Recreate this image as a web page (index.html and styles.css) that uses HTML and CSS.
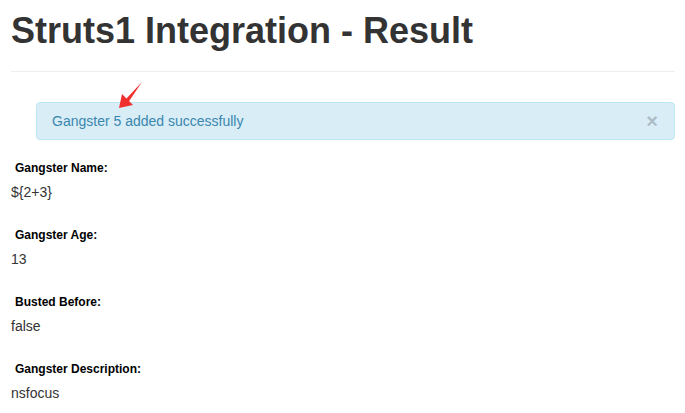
FILE: index.html
```html
<!DOCTYPE html>
<html>
<head>
<meta charset="utf-8">
<link rel="stylesheet" href="styles.css">
</head>
<body>
<div class="page">
  <h1 class="title">Struts1 Integration - Result</h1>
  <div class="rule"></div>
  <div class="alert">
    <span class="alert-text">Gangster 5 added successfully</span>
    <span class="close">&times;</span>
    <svg class="arrow" width="40" height="40" viewBox="0 0 40 40">
      <path d="M29 3 L12.5 20.5 L15.5 23 Z" fill="#f0302e"/>
      <path d="M6 29 L9 15 L20 26 Z" fill="#f0302e"/>
    </svg>
  </div>
  <div class="field">
    <div class="label">Gangster Name:</div>
    <div class="value">${2+3}</div>
  </div>
  <div class="field">
    <div class="label">Gangster Age:</div>
    <div class="value">13</div>
  </div>
  <div class="field">
    <div class="label">Busted Before:</div>
    <div class="value">false</div>
  </div>
  <div class="field">
    <div class="label">Gangster Description:</div>
    <div class="value">nsfocus</div>
  </div>
</div>
</body>
</html>
```
FILE: styles.css
```css
html, body {
  margin: 0;
  padding: 0;
  background: #fff;
}
body {
  font-family: "Liberation Sans", Arial, sans-serif;
  color: #333;
}
.page {
  padding: 0 10px 0 11px;
}
.title {
  margin: 0;
  padding-top: 11px;
  font-size: 36px;
  line-height: 40px;
  font-weight: bold;
  color: #333;
}
.rule {
  margin-top: 20px;
  height: 1px;
  background: #eee;
}
.alert {
  position: relative;
  margin: 30px 0 0 25px;
  height: 36px;
  border: 1px solid #bce8f1;
  border-radius: 4px;
  background: #d9edf7;
  color: #3a87ad;
  display: flex;
  align-items: center;
  padding: 0 16px 0 15px;
  font-size: 14px;
}
.alert-text {
  flex: 1;
}
.close {
  font-size: 20px;
  font-weight: bold;
  color: #000;
  opacity: 0.2;
  line-height: 1;
  margin-right: 0px;
}
.arrow {
  position: absolute;
  left: 76px;
  top: -24px;
}
.label {
  padding-left: 4px;
  font-size: 12px;
  font-weight: bold;
  color: #000;
  line-height: 16px;
}
.value {
  margin-top: 8px;
  font-size: 14px;
  line-height: 16px;
  color: #333;
  margin-bottom: 27px;
}
.alert + .field {
  margin-top: 20px;
}
```
